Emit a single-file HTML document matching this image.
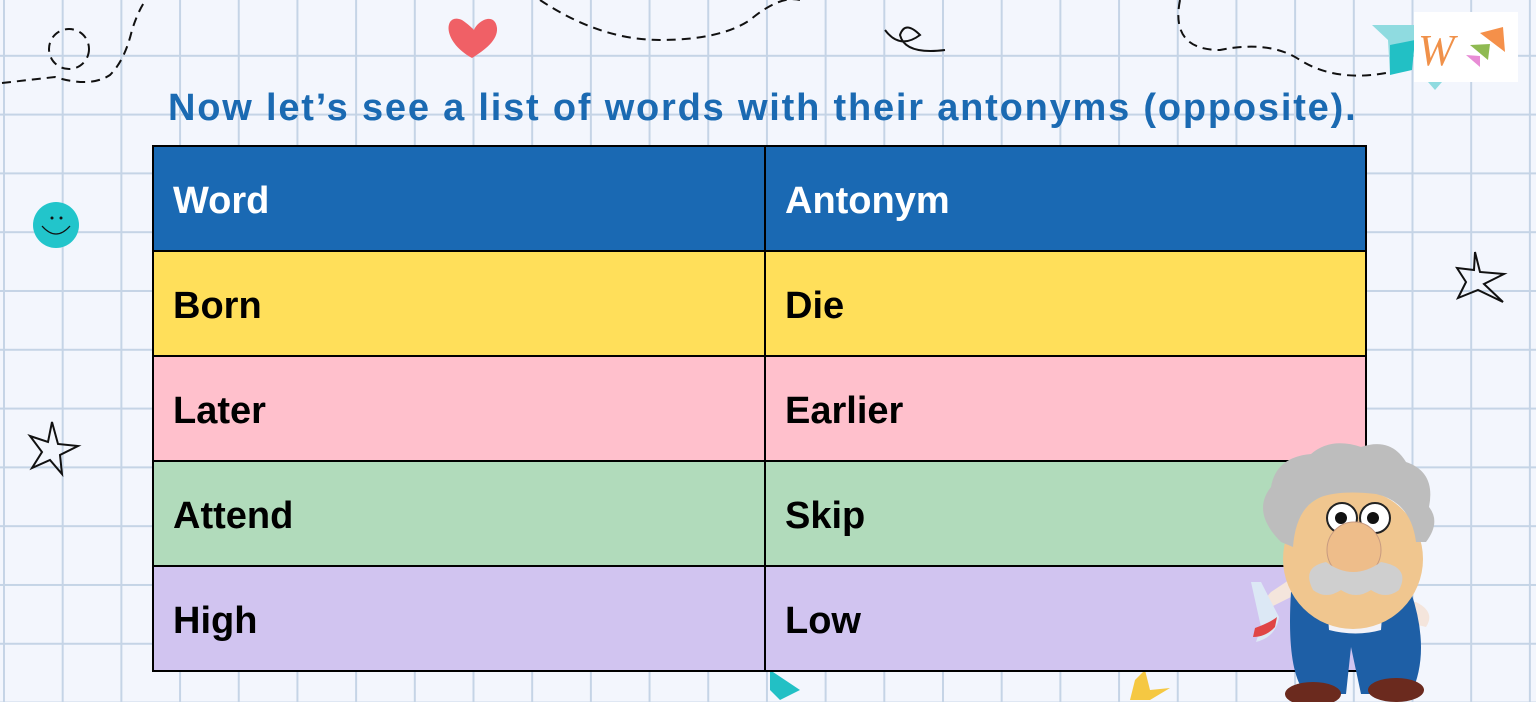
<!DOCTYPE html>
<html><head><meta charset="utf-8"><style>
html,body{margin:0;padding:0}
body{width:1536px;height:700px;overflow:hidden;position:relative;background-color:#f3f6fd;
background-image:linear-gradient(to right,#c5d4e6 2px,transparent 2px),linear-gradient(to bottom,#c5d4e6 2px,transparent 2px);
background-size:58.7px 58.8px;background-position:3px -4px;font-family:"Comic Sans MS","Liberation Sans",sans-serif}
.title{position:absolute;left:168px;top:87px;font-size:38px;font-weight:bold;color:#1b6ab2;letter-spacing:1.8px;white-space:nowrap}
table{position:absolute;left:152px;top:145px;border-collapse:collapse;width:1215px;table-layout:fixed}
td{border:2px solid #000;height:101px;box-sizing:border-box;padding:6px 0 0 19px;font-size:38px;font-weight:bold;color:#000}
td:first-child{width:612px}
tr{height:105px}
tr.h td{background:#1a69b3;color:#fff}
tr.y td{background:#ffdf5a}
tr.p td{background:#ffc0cc}
tr.g td{background:#b1dbbb}
tr.v td{background:#d1c4f0}
svg{position:absolute}
</style></head><body>
<svg width="1536" height="700" style="left:0;top:0">
<path d="M2 83 L55 77 Q90 88 110 75 Q125 60 132 30 Q140 5 150 -5" fill="none" stroke="#111" stroke-width="2" stroke-dasharray="9 6"/>
<circle cx="69" cy="49" r="20" fill="none" stroke="#111" stroke-width="2" stroke-dasharray="9 6"/>
<path d="M540 0 Q600 40 660 40 Q720 40 750 20 Q780 -5 800 0" fill="none" stroke="#111" stroke-width="2" stroke-dasharray="9 6"/>
<path d="M1180 0 Q1170 50 1220 50 Q1270 40 1300 60 Q1340 85 1400 70" fill="none" stroke="#111" stroke-width="2" stroke-dasharray="9 6"/>
<path d="M885 30 Q900 50 920 35 Q905 20 900 35 Q905 55 945 50" fill="none" stroke="#111" stroke-width="2"/>
<path d="M472 58 C440 40 445 12 462 20 C468 24 472 28 474 30 C478 20 495 12 497 28 C498 40 485 50 472 58Z" fill="#f06066"/>
<circle cx="56" cy="225" r="23" fill="#22c5cb"/>
<circle cx="52" cy="218" r="1.5" fill="#111"/><circle cx="61" cy="218" r="1.5" fill="#111"/>
<path d="M42 226 Q56 242 70 226" fill="none" stroke="#111" stroke-width="1.3"/>
<path d="M52 422 L58 444 L78 446 L60 455 L62 474 L50 460 L32 468 L42 452 L30 436 L48 442Z" fill="none" stroke="#111" stroke-width="2"/>
<path d="M1475 252 L1480 272 L1504 274 L1484 284 L1503 302 L1478 290 L1458 298 L1466 282 L1457 268 L1474 270Z" fill="none" stroke="#111" stroke-width="2"/>
<path d="M1372 25 L1420 25 L1410 60 L1390 75 L1388 40Z" fill="#8fdbe0"/>
<path d="M1390 45 L1415 40 L1412 70 L1390 75Z" fill="#22c0c5"/>
<path d="M1428 82 L1442 82 L1435 90Z" fill="#8fdbe0"/>
<rect x="1414" y="12" width="104" height="70" fill="#fff"/>
<text x="1418" y="65" font-family="Liberation Serif,serif" font-style="italic" font-size="44" fill="#f0914a">W</text>
<path d="M1480 33 L1503 27 L1505 52Z" fill="#f5904a"/>
<path d="M1470 45 L1490 44 L1488 60Z" fill="#8fba52"/>
<path d="M1466 55 L1480 56 L1480 67Z" fill="#e88cd5"/>
<path d="M1135 680 L1145 670 L1150 690 L1170 688 L1150 700 L1130 700Z" fill="#f5c842"/>
<path d="M770 670 L800 690 L780 700 L770 690Z" fill="#22c0c5"/>
</svg>
<div class="title">Now let’s see a list of words with their antonyms (opposite).</div>
<table>
<tr class="h"><td>Word</td><td>Antonym</td></tr>
<tr class="y"><td>Born</td><td>Die</td></tr>
<tr class="p"><td>Later</td><td>Earlier</td></tr>
<tr class="g"><td>Attend</td><td>Skip</td></tr>
<tr class="v"><td>High</td><td>Low</td></tr>
</table>
<svg width="210" height="270" style="left:1236px;top:432px" viewBox="0 0 200 270">
<path d="M60 140 L30 160 Q20 170 30 175 L60 160Z" fill="#f4e5dc"/>
<path d="M10 150 L20 195 L15 210 Q35 205 38 185 L20 150Z" fill="#dce8f5"/>
<path d="M14 196 Q30 190 36 185 L34 195 Q25 205 12 205Z" fill="#e04545"/>
<path d="M140 165 L175 170 Q195 180 185 195 L145 185Z" fill="#f4e5dc"/>
<path d="M50 160 Q45 240 65 262 L105 262 L110 215 L120 262 L170 262 Q190 220 170 160Z" fill="#1e5fa6"/>
<ellipse cx="72" cy="262" rx="28" ry="12" fill="#6b2a1e"/>
<ellipse cx="155" cy="258" rx="28" ry="12" fill="#6b2a1e"/>
<path d="M86 172 L142 172 L140 198 Q115 205 88 198Z" fill="#f2f2f8"/>
<circle cx="112" cy="127" r="70" fill="#f0c68f"/>
<path d="M40 110 Q10 80 30 55 Q35 25 70 22 Q90 5 120 15 Q150 5 165 30 Q195 40 188 75 Q200 90 185 110 L175 110 Q170 70 135 62 Q100 58 80 65 Q55 75 52 115Z" fill="#bdbdbd"/>
<circle cx="101" cy="86" r="15" fill="#fff" stroke="#222" stroke-width="2"/>
<circle cx="134" cy="86" r="15" fill="#fff" stroke="#222" stroke-width="2"/>
<circle cx="100" cy="86" r="6" fill="#111"/><circle cx="132" cy="86" r="6" fill="#111"/>
<ellipse cx="113" cy="118" rx="27" ry="28" fill="#eebd8a" stroke="#c79a80"/>
<path d="M72 158 Q60 135 85 130 Q112 150 140 130 Q170 135 158 158 Q145 168 130 158 Q115 168 100 158 Q85 168 72 158Z" fill="#cfcfcf"/>
</svg>
</body></html>
